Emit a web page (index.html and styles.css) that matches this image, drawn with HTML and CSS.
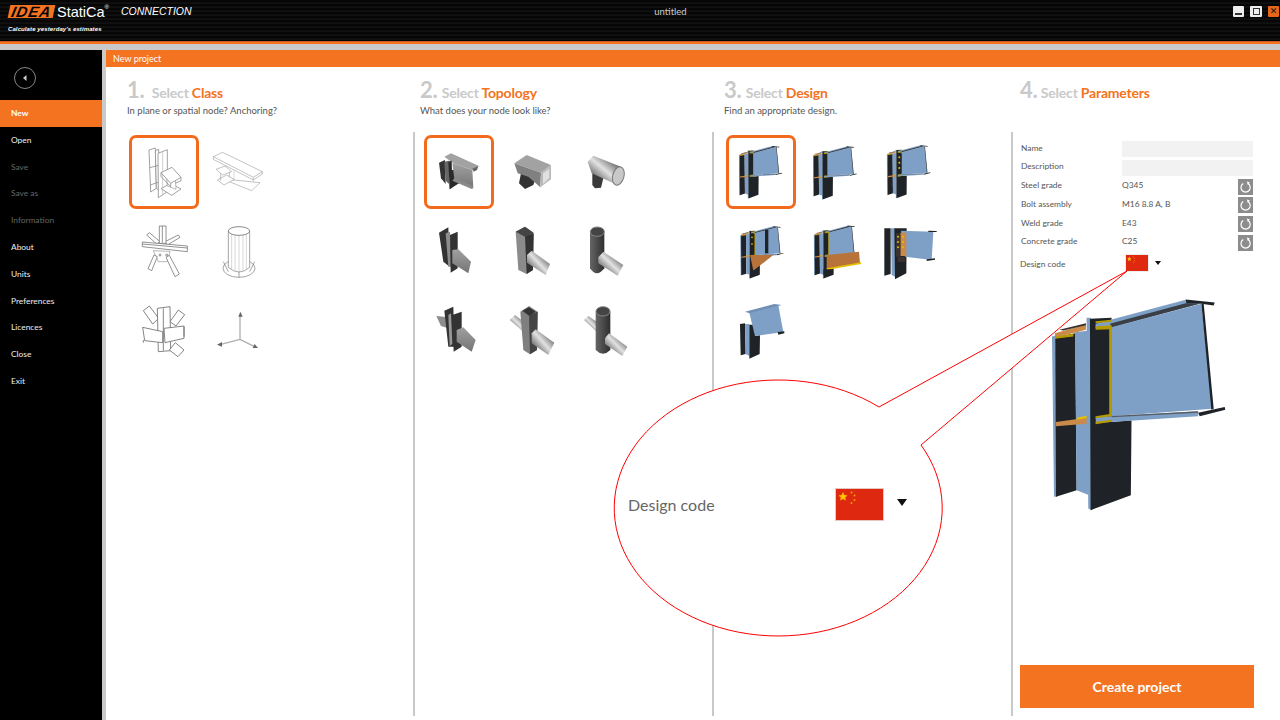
FILE: index.html
```html
<!DOCTYPE html>
<html lang="en">

<head>
    <meta charset="UTF-8" />
    <title>IDEA StatiCa Connection</title>
    <link rel="stylesheet" href="styles.css">
</head>

<body>
    <svg class="svg-defs" aria-hidden="true">
        <defs>
            <linearGradient id="steel" x1="0" y1="0" x2="0" y2="1">
                <stop offset="0" stop-color="#a0a0a0" />
                <stop offset="1" stop-color="#757575" />
            </linearGradient>
            <linearGradient id="tube" x1="0" y1="1" x2="1" y2="0">
                <stop offset="0.2" stop-color="#6a6a6a" />
                <stop offset="0.5" stop-color="#e2e2e2" />
                <stop offset="0.8" stop-color="#6a6a6a" />
            </linearGradient>
            <linearGradient id="tubev" x1="0" y1="0" x2="1" y2="0">
                <stop offset="0" stop-color="#666" />
                <stop offset="0.5" stop-color="#4a4a4a" />
                <stop offset="1" stop-color="#2f2f2f" />
            </linearGradient>
            <symbol id="joint-plain" viewBox="60 50 535 645">
                <polygon points="66,168 78,165 82,650 72,650" fill="#7fa0c6" />
                <polygon points="76,170 136,158 140,630 78,650" fill="#1f2327" />
                <polygon points="135,155 178,150 178,645 140,630" fill="#7fa0c6" />
                <polygon points="170,112 182,112 185,690 175,685" fill="#7fa0c6" />
                <polygon points="180,115 245,112 245,425 305,420 303,645 182,690" fill="#1f2327" />
                <polygon points="245,140 515,70 548,385 245,408" fill="#7fa0c6" />
                <polygon points="197,130 468,58 510,70 245,140 197,142" fill="#7fa0c6" />
                <polygon points="240,130 468,68 510,70 245,140" fill="#3a3f45" />
                <polygon points="468,57 555,66 552,75 515,70 470,68" fill="#1f2327" />
                <polygon points="515,70 522,70 552,385 545,388" fill="#1f2327" />
                <polygon points="197,410 505,393 505,408 198,428" fill="#7fa0c6" />
                <polygon points="245,407 505,393 505,397 245,411" fill="#555c63" />
                <polygon points="505,397 585,380 587,388 510,408" fill="#1f2327" />
            </symbol>
            <symbol id="joint" viewBox="60 50 535 645">
                <use href="#joint-plain" x="60" y="50" width="535" height="645" />
                <polygon points="75,158 168,132 168,148 75,172" fill="#c98a4a" />
                <polygon points="88,148 168,128 168,134 100,150" fill="#3a3230" />
                <polygon points="75,168 130,160 130,168 75,175" fill="#b59b00" />
                <polygon points="78,425 170,412 170,430 78,438" fill="#c98a4a" />
                <polygon points="140,412 170,406 170,414 140,418" fill="#e4c000" />
                <polygon points="238,140 245,140 245,405 238,400" fill="#b59b00" />
                <polygon points="197,122 245,118 245,124 197,128" fill="#b59b00" />
                <polygon points="197,138 245,134 245,146 197,148" fill="#b59b00" />
                <polygon points="197,408 245,400 245,408 197,414" fill="#b59b00" />
                <polygon points="197,424 245,418 245,424 197,432" fill="#b59b00" />
            </symbol>
            <symbol id="flag" viewBox="0 0 47 31" preserveAspectRatio="none">
                <rect width="47" height="31" fill="#de2910" />
                <polygon points="7,3 8.4,6 11.5,6.4 9.2,8.5 9.9,11.6 7,10 4.1,11.6 4.8,8.5 2.5,6.4 5.6,6" fill="#ffc400" />
                <circle cx="15.5" cy="3.5" r="1" fill="#f2a000" />
                <circle cx="18.5" cy="6.5" r="1" fill="#f2a000" />
                <circle cx="18.5" cy="11" r="1" fill="#f2a000" />
                <circle cx="15.5" cy="14" r="1" fill="#f2a000" />
            </symbol>
            <symbol id="refresh" viewBox="0 0 15 16">
                <rect width="15" height="16" fill="#8c8c8c" />
                <path d="M5.2 4.6a4.6 4.6 0 1 0 4.8 0" fill="none" stroke="#fff" stroke-width="1.2" />
                <polygon points="9,2.6 12,3.4 9.6,5.8" fill="#fff" />
            </symbol>
        </defs>
    </svg>

    <div class="app">
        <header class="titlebar">
            <div class="brand">
                <div class="brand-top">
                    <span class="logo-idea">IDEA</span>
                    <span class="logo-statica">StatiCa<sup>®</sup></span>
                    <span class="logo-product">CONNECTION</span>
                </div>
                <div class="logo-claim">Calculate yesterday's estimates</div>
            </div>
            <div class="doc-title">untitled</div>
            <div class="win-buttons">
                <button class="win-btn" type="button"><span class="win-min"></span></button>
                <button class="win-btn win-mid" type="button"><span class="win-max"></span></button>
                <button class="win-btn win-close" type="button">✕</button>
            </div>
        </header>
        <div class="stripe"></div>

        <div class="workspace">
            <nav class="sidebar">
                <div class="back-row">
                    <div class="back-btn">
                        <svg width="8" height="8" viewBox="0 0 8 8"><polygon points="5.5,1 2,4 5.5,7" fill="#ccc" /></svg>
                    </div>
                </div>
                <a class="nav-item active">New</a>
                <a class="nav-item">Open</a>
                <a class="nav-item disabled">Save</a>
                <a class="nav-item disabled">Save as</a>
                <a class="nav-item disabled">Information</a>
                <a class="nav-item">About</a>
                <a class="nav-item">Units</a>
                <a class="nav-item">Preferences</a>
                <a class="nav-item">Licences</a>
                <a class="nav-item">Close</a>
                <a class="nav-item">Exit</a>
            </nav>

            <main class="content">
                <div class="content-title">New project</div>
                <div class="steps">

                    <section class="step step-class">
                        <h2><span class="num">1.</span> <span class="sel">Select</span> <span class="hl">Class</span></h2>
                        <p class="hint">In plane or spatial node? Anchoring?</p>
                        <div class="thumbs">
                            <div class="thumb selected">
                                <svg viewBox="57 45 210 222" fill="#fff" stroke="#8a8a8a" stroke-width="2.4">
                                    <polygon points="117,90 136,84 139,205 122,216" />
                                    <polygon points="136,92 146,88 146,210 139,205" />
                                    <path d="M119 143L146 136M121 195L146 186" fill="none" />
                                    <polygon points="144,100 172,89 172,215 145,233" />
                                    <path d="M158 96V226" fill="none" stroke="#c4c4c4" />
                                    <polygon points="182,190 213,207 185,226 153,206" />
                                    <polygon points="170,172 196,175 198,208 172,198" fill="#fff" stroke="#aaa" />
                                    <polygon points="153,158 186,142 213,172 182,190" />
                                    <path d="M153 158V170L182 200V190M213 172V182L196 190" fill="none" />
                                </svg>
                            </div>
                            <div class="thumb">
                                <svg viewBox="270 45 210 222" fill="#fff" stroke="#a4a4a4" stroke-width="2">
                                    <polygon points="310,110 338,97 457,155 430,172" />
                                    <path d="M310 110V118L430 180V172M457 155V162L430 180" fill="none" />
                                    <path d="M372 150V190M430 180V205" fill="none" stroke="#c8c8c8" />
                                    <polygon points="372,180 450,188 425,212 345,180" />
                                    <polygon points="318,148 345,138 365,155 338,165" />
                                    <polygon points="322,180 350,165 372,178 342,195" />
                                    <path d="M332 160V182M358 155V172" fill="none" />
                                </svg>
                            </div>
                            <div class="thumb thumb-empty"></div>

                            <div class="thumb">
                                <svg viewBox="57 291 210 222" fill="#fff" stroke="#777" stroke-width="2.4">
                                    <polygon points="110,345 118,338 150,365 140,372" />
                                    <polygon points="210,352 205,345 165,365 172,375" />
                                    <polygon points="148,318 168,318 168,370 148,370" />
                                    <path d="M157 318V368" fill="none" />
                                    <polygon points="97,366 232,378 232,395 97,380" />
                                    <path d="M97 372L232 384" fill="none" />
                                    <polygon points="130,392 180,394 172,425 145,425" stroke-width="1.6" />
                                    <polygon points="132,405 142,410 125,452 114,446" />
                                    <polygon points="168,412 178,406 208,462 195,470" />
                                    <circle cx="150" cy="405" r="3" />
                                    <circle cx="170" cy="405" r="3" />
                                </svg>
                            </div>
                            <div class="thumb">
                                <svg viewBox="270 291 210 222" fill="#fff" stroke="#777" stroke-width="2">
                                    <ellipse cx="387" cy="445" rx="48" ry="27" />
                                    <path d="M340 425L355 455M434 425L419 455M387 420V472" fill="none" />
                                    <path d="M355 333V442Q387 470 419 442V333" />
                                    <path d="M365 340V448M375 342V452M387 344V455M399 342V452M409 340V448" fill="none" stroke="#aaa" stroke-width="1.4" />
                                    <ellipse cx="387" cy="333" rx="32" ry="13" stroke-width="2.6" />
                                </svg>
                            </div>
                            <div class="thumb thumb-empty"></div>

                            <div class="thumb">
                                <svg viewBox="57 537 210 222" fill="#fff" stroke="#666" stroke-width="2.4">
                                    <polygon points="100,572 118,558 146,595 128,612" />
                                    <polygon points="180,605 205,570 224,584 198,618" />
                                    <polygon points="142,565 180,560 182,692 145,695" />
                                    <path d="M160 565V692" fill="none" />
                                    <polygon points="98,622 158,635 158,668 104,662" />
                                    <polygon points="162,625 222,618 222,655 165,668" />
                                    <polygon points="178,690 196,668 222,690 204,710" />
                                    <path d="M100 660V668M222 620V650" fill="none" />
                                </svg>
                            </div>
                            <div class="thumb">
                                <svg viewBox="270 537 210 222" fill="none" stroke="#b0b0b0" stroke-width="4">
                                    <path d="M390 658V585M390 658L333 673M390 658L432 679" />
                                    <polygon points="391,575 398,590 385,590" fill="#666" stroke="none" />
                                    <polygon points="321,674 336,666 336,680" fill="#666" stroke="none" />
                                    <polygon points="444,684 428,684 434,672" fill="#666" stroke="none" />
                                </svg>
                            </div>
                        </div>
                    </section>

                    <section class="step step-topology">
                        <h2><span class="num">2.</span> <span class="sel">Select</span> <span class="hl">Topology</span></h2>
                        <p class="hint">What does your node look like?</p>
                        <div class="thumbs">
                            <div class="thumb selected">
                                <svg viewBox="27 45 210 222">
                                    <polygon points="72,128 90,120 92,192 78,175" fill="#333" />
                                    <polygon points="88,125 102,122 102,192 92,182" fill="#666" />
                                    <polygon points="104,150 132,150 132,190 104,208" fill="#2a2a2a" />
                                    <polygon points="88,110 108,100 192,138 172,150 118,132" fill="#a2a2a2" />
                                    <polygon points="112,130 172,150 175,205 118,178" fill="url(#steel)" />
                                    <polygon points="172,146 190,138 186,150 176,155" fill="#666" />
                                    <polygon points="118,175 175,198 172,208 112,182" fill="#8a8a8a" />
                                    <polygon points="100,125 110,122 112,200 104,208" fill="#2a2a2a" />
                                </svg>
                            </div>
                            <div class="thumb">
                                <svg viewBox="240 45 210 222">
                                    <polygon points="318,160 362,175 355,195 330,207 312,190" fill="#333" />
                                    <polygon points="298,130 335,105 408,135 378,158" fill="#a2a2a2" />
                                    <polygon points="298,130 378,158 376,202 340,170 308,160" fill="#808080" />
                                    <polygon points="378,158 408,135 408,178 376,202" fill="#b9b9b9" />
                                    <polygon points="384,160 403,146 403,174 384,192" fill="#e0e0e0" />
                                </svg>
                            </div>
                            <div class="thumb">
                                <svg viewBox="453 45 210 222">
                                    <polygon points="532,150 565,175 558,203 540,205 532,195" fill="#3a3a3a" />
                                    <polygon points="518,125 535,107 618,140 596,190 530,160" fill="url(#tube)" />
                                    <ellipse cx="610" cy="168" rx="17" ry="28" transform="rotate(15 610 168)" fill="#c8c8c8" stroke="#777" stroke-width="3" />
                                </svg>
                            </div>

                            <div class="thumb">
                                <svg viewBox="27 291 210 222">
                                    <polygon points="72,338 100,322 104,440 85,425" fill="#333" />
                                    <polygon points="92,340 105,335 112,440 100,440" fill="#8d8d8d" />
                                    <polygon points="105,345 128,335 128,445 107,458" fill="#333" />
                                    <polygon points="112,390 130,388 168,425 160,460 112,430" fill="url(#steel)" />
                                </svg>
                            </div>
                            <div class="thumb">
                                <svg viewBox="240 291 210 222">
                                    <polygon points="302,335 330,320 356,340 354,450 335,462 310,450" fill="#8b8b8b" />
                                    <polygon points="330,348 356,340 354,450 335,462" fill="#333" />
                                    <polygon points="302,335 330,320 356,338 330,350" fill="#444" />
                                    <polygon points="336,405 350,392 405,432 392,465 336,428" fill="url(#tube)" />
                                </svg>
                            </div>
                            <div class="thumb">
                                <svg viewBox="453 291 210 222">
                                    <path d="M525 335V445Q545 475 568 445V335Z" fill="url(#tubev)" />
                                    <ellipse cx="547" cy="335" rx="21" ry="14" fill="#444" stroke="#888" stroke-width="3" />
                                    <polygon points="550,412 565,395 625,435 608,467 550,430" fill="url(#tube)" />
                                </svg>
                            </div>

                            <div class="thumb">
                                <svg viewBox="27 537 210 222">
                                    <polygon points="64,588 100,592 100,625 78,618" fill="#8d8d8d" />
                                    <polygon points="88,572 115,560 118,680 100,680" fill="#333" />
                                    <polygon points="100,585 108,580 112,672 104,678" fill="#999" />
                                    <polygon points="112,585 140,575 140,680 116,695" fill="#333" />
                                    <polygon points="125,630 145,622 182,660 170,695 125,665" fill="url(#steel)" />
                                </svg>
                            </div>
                            <div class="thumb">
                                <svg viewBox="240 537 210 222">
                                    <polygon points="284,600 300,585 335,612 325,635" fill="url(#tube)" />
                                    <polygon points="316,575 342,558 368,575 366,690 345,703 325,690" fill="#7f7f7f" />
                                    <polygon points="342,585 368,575 366,690 345,703" fill="#444" />
                                    <polygon points="322,572 342,562 362,575 342,587" fill="#333" />
                                    <polygon points="350,640 362,628 418,668 400,705 350,670" fill="url(#tube)" />
                                </svg>
                            </div>
                            <div class="thumb">
                                <svg viewBox="453 537 210 222">
                                    <polygon points="507,600 520,588 555,612 545,635" fill="url(#tube)" />
                                    <path d="M542 575V690Q564 712 586 690V575Z" fill="url(#tubev)" />
                                    <ellipse cx="564" cy="574" rx="21" ry="14" fill="#444" stroke="#888" stroke-width="3" />
                                    <polygon points="570,655 582,640 637,680 622,708 570,672" fill="url(#tube)" />
                                </svg>
                            </div>
                        </div>
                    </section>

                    <section class="step step-design">
                        <h2><span class="num">3.</span> <span class="sel">Select</span> <span class="hl">Design</span></h2>
                        <p class="hint">Find an appropriate design.</p>
                        <div class="thumbs">
                            <div class="thumb selected">
                                <svg viewBox="33 45 210 222"><use href="#joint" x="70" y="76" width="133" height="161" /></svg>
                            </div>
                            <div class="thumb">
                                <svg viewBox="246 45 210 222"><use href="#joint" x="292" y="77" width="135" height="163" /></svg>
                            </div>
                            <div class="thumb">
                                <svg viewBox="459 45 210 222">
                                    <use href="#joint" x="508" y="74" width="146" height="162" />
                                    <rect x="547" y="100" width="13" height="60" fill="#1f2327" />
                                    <circle cx="553" cy="112" r="3" fill="#e4c000" />
                                    <circle cx="553" cy="128" r="3" fill="#e4c000" />
                                    <circle cx="553" cy="144" r="3" fill="#e4c000" />
                                </svg>
                            </div>

                            <div class="thumb">
                                <svg viewBox="33 291 210 222">
                                    <use href="#joint" x="67" y="317" width="147" height="160" />
                                    <rect x="150" y="330" width="10" height="70" fill="#1f2327" />
                                    <polygon points="105,405 175,405 115,452" fill="#b8733a" />
                                    <rect x="107" y="340" width="9" height="60" fill="#1f2327" />
                                    <circle cx="111" cy="352" r="2.6" fill="#e4c000" />
                                    <circle cx="111" cy="372" r="2.6" fill="#e4c000" />
                                    <rect x="106" y="450" width="22" height="16" fill="#1f2327" />
                                </svg>
                            </div>
                            <div class="thumb">
                                <svg viewBox="246 291 210 222">
                                    <use href="#joint" x="287" y="315" width="150" height="162" />
                                    <polygon points="335,405 432,395 435,430 335,447" fill="#b8733a" />
                                    <polygon points="335,445 438,427 438,432 335,450" fill="#e4c000" />
                                    <rect x="325" y="448" width="22" height="16" fill="#1f2327" />
                                </svg>
                            </div>
                            <div class="thumb">
                                <svg viewBox="459 291 210 222">
                                    <polygon points="508,325 527,325 527,462 508,467" fill="#1f2327" />
                                    <polygon points="528,325 540,325 540,470 530,465" fill="#7fa0c6" />
                                    <polygon points="538,325 575,325 574,460 540,478" fill="#1f2327" />
                                    <polygon points="558,332 655,335 650,420 570,410" fill="#7fa0c6" />
                                    <polygon points="640,332 665,333 665,336 640,336" fill="#1f2327" />
                                    <polygon points="635,418 660,415 660,419 635,423" fill="#1f2327" />
                                    <rect x="556" y="338" width="18" height="70" fill="#c98a4a" />
                                    <rect x="543" y="340" width="13" height="70" fill="#3a3230" />
                                    <circle cx="549" cy="350" r="3" fill="#e4c000" />
                                    <circle cx="549" cy="366" r="3" fill="#e4c000" />
                                    <circle cx="549" cy="382" r="3" fill="#e4c000" />
                                    <circle cx="564" cy="350" r="3" fill="#e4c000" />
                                    <circle cx="564" cy="366" r="3" fill="#e4c000" />
                                    <circle cx="564" cy="382" r="3" fill="#e4c000" />
                                    <rect x="548" y="410" width="22" height="16" fill="#3a3230" />
                                </svg>
                            </div>

                            <div class="thumb">
                                <svg viewBox="33 537 210 222">
                                    <polygon points="75,612 90,610 92,702 77,706" fill="#1f2327" />
                                    <polygon points="90,612 103,612 103,708 92,702" fill="#7fa0c6" />
                                    <polygon points="103,614 120,614 120,648 135,646 134,702 103,716" fill="#1f2327" />
                                    <polygon points="103,578 190,556 205,636 120,648" fill="#7fa0c6" />
                                    <polygon points="90,575 178,552 200,555 104,580" fill="#6f8fb5" />
                                    <polygon points="188,636 208,634 208,640 190,644" fill="#1f2327" />
                                </svg>
                            </div>
                        </div>
                    </section>

                    <section class="step step-params">
                        <h2><span class="num">4.</span> <span class="sel">Select</span> <span class="hl">Parameters</span></h2>
                        <p class="hint">&nbsp;</p>
                        <div class="params-body">
                            <div class="params">
                                <div class="param-row">
                                    <label>Name</label>
                                    <div class="field"></div>
                                </div>
                                <div class="param-row">
                                    <label>Description</label>
                                    <div class="field"></div>
                                </div>
                                <div class="param-row">
                                    <label>Steel grade</label>
                                    <span class="value">Q345</span>
                                    <svg class="refresh"><use href="#refresh" /></svg>
                                </div>
                                <div class="param-row">
                                    <label>Bolt assembly</label>
                                    <span class="value">M16 8.8 A, B</span>
                                    <svg class="refresh"><use href="#refresh" /></svg>
                                </div>
                                <div class="param-row">
                                    <label>Weld grade</label>
                                    <span class="value">E43</span>
                                    <svg class="refresh"><use href="#refresh" /></svg>
                                </div>
                                <div class="param-row">
                                    <label>Concrete grade</label>
                                    <span class="value">C25</span>
                                    <svg class="refresh"><use href="#refresh" /></svg>
                                </div>
                                <div class="param-row code-row">
                                    <label>Design code</label>
                                    <svg class="flag-small"><use href="#flag" /></svg>
                                    <span class="caret"></span>
                                </div>
                            </div>
                            <svg class="preview" viewBox="60 50 535 645"><use href="#joint" x="60" y="50" width="535" height="645" /></svg>
                            <button class="create-btn" type="button">Create project</button>
                        </div>
                    </section>
                </div>
            </main>
        </div>

        <div class="callout">
            <svg class="balloon" width="1280" height="720" viewBox="0 0 1280 720">
                <path d="M879 407L1127 271L921 445A164 128 0 1 1 879 407Z" fill="#fff" stroke="#f00" stroke-width="1" />
            </svg>
            <div class="callout-row">
                <span class="callout-label">Design code</span>
                <svg class="flag-big"><use href="#flag" /></svg>
                <span class="caret caret-big"></span>
            </div>
        </div>
    </div>
</body>

</html>
```

FILE: styles.css
```css
* {
    padding: 0;
    margin: 0;
    box-sizing: border-box;
}

body {
    font-family: Lato, "Open Sans", sans-serif;
    color: #555;
}

.svg-defs {
    position: absolute;
    width: 0;
    height: 0;
}

.app {
    position: relative;
    width: 1280px;
    height: 720px;
    overflow: hidden;
    display: flex;
    flex-direction: column;
    background: #c9c9c9;
}

/* title bar */
.titlebar {
    height: 41px;
    display: flex;
    background: repeating-linear-gradient(180deg, #060606 0, #060606 2px, #181818 3px, #0b0b0b 4px);
    color: #fff;
}

.brand {
    width: 540px;
    padding: 5px 0 0 9px;
}

.brand-top {
    display: flex;
    align-items: flex-start;
    height: 19px;
}

.logo-idea {
    width: 45px;
    height: 13px;
    background: #f47321;
    color: #000;
    font: italic bold 15px/13px "Liberation Sans", sans-serif;
    letter-spacing: 1px;
    text-align: center;
    transform: skewX(-12deg);
}

.logo-statica {
    margin-left: 3px;
    font: 14.5px/14px "Liberation Sans", sans-serif;
}

.logo-statica sup {
    font-size: 6px;
    vertical-align: 8px;
    line-height: 0;
}

.logo-product {
    margin-left: 12px;
    font: italic 10.5px/13px "Liberation Sans", sans-serif;
}

.logo-claim {
    margin-top: 1px;
    margin-left: -1px;
    font: italic bold 6px/8px "Liberation Sans", sans-serif;
    letter-spacing: 0.1px;
}

.doc-title {
    width: 261px;
    padding-top: 6px;
    font-size: 9.5px;
    color: #ccc;
    text-align: center;
}

.win-buttons {
    margin-left: auto;
    display: flex;
    padding: 6px 1px 0 0;
}

.win-btn {
    width: 11px;
    height: 11px;
    border: none;
    border-radius: 1px;
    background: #eee;
    display: flex;
    align-items: center;
    justify-content: center;
}

.win-mid {
    width: 12px;
    margin: 0 6px;
}

.win-min {
    width: 7px;
    height: 2px;
    margin-top: 5px;
    background: #333;
}

.win-max {
    width: 7px;
    height: 7px;
    border: 1px solid #333;
}

.win-close {
    background: #e8661a;
    color: #111;
    font: bold 9px/11px "DejaVu Sans", sans-serif;
}

.stripe {
    height: 9px;
    background: linear-gradient(180deg, #c9591a 0, #c9591a 1px, #f47321 1px, #f47321 3px, #c9c9c9 3px);
}

/* left menu and main area */
.workspace {
    flex: 1;
    display: flex;
    gap: 4px;
    min-height: 0;
}

.sidebar {
    width: 102px;
    background: #000;
    display: flex;
    flex-direction: column;
}

.back-row {
    height: 50px;
    padding: 17px 0 0 14px;
}

.back-btn {
    width: 22px;
    height: 22px;
    border: 1px solid #888;
    border-radius: 50%;
    display: flex;
    align-items: center;
    justify-content: center;
}

.nav-item {
    height: 26.8px;
    padding-left: 11px;
    font-size: 8.4px;
    line-height: 26.8px;
    color: #eee;
}

.nav-item.active {
    background: #f47321;
    color: #fff;
    font-weight: 700;
}

.nav-item.disabled {
    color: #666;
}

.content {
    flex: 1;
    background: #fff;
    display: flex;
    flex-direction: column;
}

.content-title {
    height: 17px;
    padding-left: 7px;
    background: #f47321;
    color: #fff;
    font-size: 9px;
    line-height: 17px;
}

.steps {
    flex: 1;
    display: grid;
    grid-template-columns: 309px 299px 299px 1fr;
}

.step {
    padding-top: 10px;
    display: flex;
    flex-direction: column;
}

.step h2 {
    height: 26px;
    font-size: 14px;
    line-height: 26px;
    font-weight: 700;
    letter-spacing: -0.2px;
    white-space: nowrap;
}

.num {
    font-size: 22px;
    color: #c9c9c9;
    margin-right: 1px;
}

.step-class .num {
    margin-right: 4px;
}

.step-params .num {
    margin-right: 0;
}

.sel {
    color: #c9c9c9;
}

.hl {
    color: #f47321;
}

.hint {
    height: 15px;
    font-size: 9.5px;
    line-height: 15px;
    color: #555;
}

.step-class h2,
.step-class .hint {
    margin-left: 21px;
}

.step-topology h2,
.step-topology .hint {
    margin-left: 5px;
}

.step-design h2,
.step-design .hint {
    margin-left: 10px;
}

.step-params h2 {
    margin-left: 7px;
}

.thumbs {
    flex: 1;
    margin: 14px 0 4px;
    padding-top: 3px;
    display: grid;
    grid-template-columns: repeat(3, 70px);
    grid-auto-rows: 74px;
    column-gap: 1px;
    row-gap: 8px;
    border-right: 2px solid #c9c9c9;
    align-content: start;
}

.step-class .thumbs {
    padding-left: 23px;
}

.step-topology .thumbs {
    padding-left: 9px;
}

.step-design .thumbs {
    padding-left: 12px;
}

.thumb {
    width: 70px;
    height: 74px;
    border: 3px solid transparent;
    border-radius: 7px;
}

.thumb.selected {
    border-color: #f46a1c;
}

.thumb svg {
    display: block;
    width: 70px;
    height: 74px;
    margin: -3px;
}

/* parameters column */
.params-body {
    flex: 1;
    margin-top: 14px;
    display: flex;
    flex-direction: column;
    padding: 9px 0 12px 8px;
}

.params {
    display: flex;
    flex-direction: column;
    gap: 2.8px;
}

.param-row {
    height: 16px;
    width: 232px;
    display: grid;
    grid-template-columns: 101px 116px 15px;
    align-items: center;
    font-size: 8.4px;
    color: #555;
}

.param-row label,
.param-row .value {
    margin-top: -3px;
}

.field {
    grid-column: 2 / 4;
    height: 16px;
    background: #f2f2f2;
}

.refresh {
    width: 15px;
    height: 16px;
}

.code-row {
    height: 18px;
    margin-left: -1px;
    grid-template-columns: 105px 30px 10px;
}

.code-row label {
    margin-top: 2px;
}

.flag-small {
    width: 24px;
    height: 18px;
    border: 1px solid #eee;
}

.caret {
    width: 0;
    height: 0;
    border-left: 3px solid transparent;
    border-right: 3px solid transparent;
    border-top: 4px solid #111;
}

.preview {
    width: 178px;
    height: 215px;
    margin: 25px 0 0 29px;
    flex: none;
}

.create-btn {
    margin: auto 0 0 -1px;
    width: 234px;
    height: 43px;
    border: none;
    background: #f47321;
    color: #fff;
    font: 700 14px Lato, sans-serif;
}

/* zoomed callout over the page */
.callout {
    position: absolute;
    inset: 0;
    pointer-events: none;
}

.balloon {
    position: absolute;
    left: 0;
    top: 0;
}

.callout-row {
    position: absolute;
    left: 628px;
    top: 488px;
    height: 33px;
    display: flex;
    align-items: center;
}

.callout-label {
    width: 208px;
    font-size: 16px;
    color: #666;
}

.flag-big {
    width: 47px;
    height: 31px;
    outline: 1px solid #e6c8c0;
}

.caret-big {
    margin: -5px 0 0 14px;
    border-left-width: 5px;
    border-right-width: 5px;
    border-top-width: 7px;
}
```
